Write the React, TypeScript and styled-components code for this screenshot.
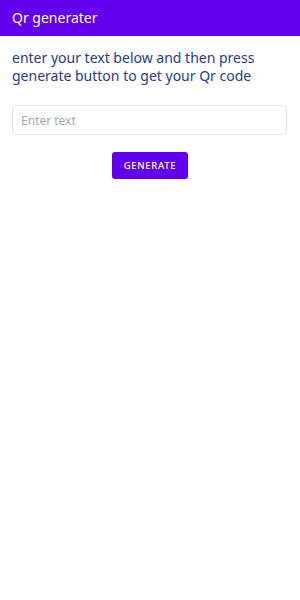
import React, { useState } from 'react'
import styled, { createGlobalStyle } from 'styled-components'

const GlobalStyle = createGlobalStyle`
  html, body {
    margin: 0;
    padding: 0;
    background: #ffffff;
    font-family: "Noto Sans", "DejaVu Sans", sans-serif;
  }
`

const Screen = styled.div`
  width: 300px;
  min-height: 600px;
  background: #ffffff;
`

const AppBar = styled.header`
  height: 36px;
  background: #6200ee;
  display: flex;
  align-items: center;
  padding: 0 12px;
  box-sizing: border-box;
`

const AppTitle = styled.h1`
  margin: 0;
  font-size: 14px;
  font-weight: 400;
  color: #ffffff;
  margin-top: -2px;
`

const Content = styled.main`
  padding: 13px 13px 0 12px;
  display: flex;
  flex-direction: column;
`

const Intro = styled.p`
  margin: 0;
  font-size: 14px;
  line-height: 18px;
  color: #2a3a8c;
`

const TextInput = styled.input`
  margin-top: 20px;
  height: 30px;
  width: 100%;
  box-sizing: border-box;
  border: 1px solid #e2e2e2;
  border-radius: 4px;
  padding: 0 8px;
  font-family: inherit;
  font-size: 12px;
  color: #333;
  outline: none;

  &::placeholder {
    color: #a8a8a8;
  }
`

const ButtonRow = styled.div`
  display: flex;
  justify-content: center;
  margin-top: 17px;
`

const GenerateButton = styled.button`
  height: 27px;
  width: 76px;
  background: #6200ee;
  color: #ffffff;
  border: none;
  border-radius: 3px;
  font-family: inherit;
  font-size: 9.5px;
  font-weight: 500;
  letter-spacing: 0.7px;
  cursor: pointer;
  padding: 0;
  margin-left: 1px;
`

export default function App() {
  const [text, setText] = useState('')

  return (
    <>
      <GlobalStyle />
      <Screen>
        <AppBar>
          <AppTitle>Qr generater</AppTitle>
        </AppBar>
        <Content>
          <Intro>
            enter your text below and then press generate button to get your Qr code
          </Intro>
          <TextInput
            placeholder="Enter text"
            value={text}
            onChange={e => setText(e.target.value)}
          />
          <ButtonRow>
            <GenerateButton type="button">GENERATE</GenerateButton>
          </ButtonRow>
        </Content>
      </Screen>
    </>
  )
}
